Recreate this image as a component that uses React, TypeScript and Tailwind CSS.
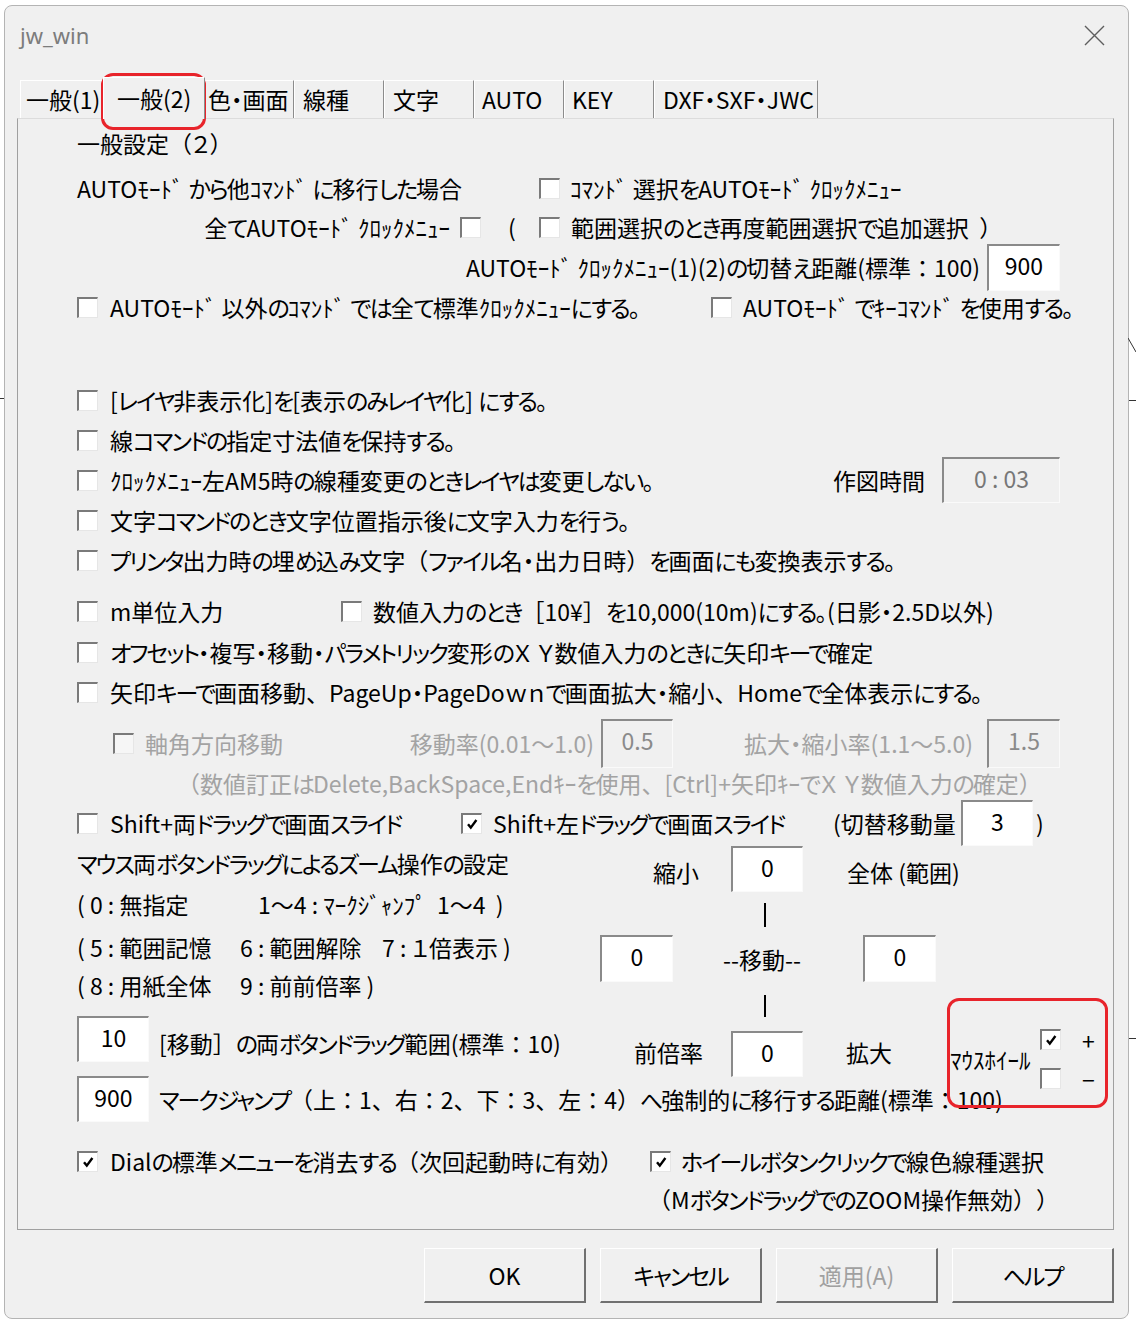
import React from 'react';

// Meiryo UI look: kana proportional and a bit tight, brackets/colons full width
const WIDE = '（）［］：、';
function T({ s }: { s: string }) {
  const out: React.ReactNode[] = [];
  let buf = '';
  let kind = '';
  const flush = () => {
    if (!buf) return;
    const key = out.length;
    if (kind === 'w') out.push(<span key={key} className="[font-feature-settings:normal]">{buf}</span>);
    else if (kind === 'k') out.push(<span key={key} className="tracking-[-2px]">{buf}</span>);
    else out.push(<React.Fragment key={key}>{buf}</React.Fragment>);
    buf = '';
  };
  for (const ch of s) {
    const c = ch.codePointAt(0) || 0;
    const k = WIDE.includes(ch) ? 'w' : (c >= 0x3041 && c <= 0x30fa) || c === 0x30fc ? 'k' : 'n';
    if (k !== kind) {
      flush();
      kind = k;
    }
    buf += ch;
  }
  flush();
  return <>{out}</>;
}

// classic sunken checkbox
function Check({ on = false, dim = false }: { on?: boolean; dim?: boolean }) {
  return (
    <span
      className={`inline-flex items-center justify-center w-[21px] h-[21px] shrink-0 border-t-2 border-l-2 border-r border-b border-t-[#7a7a7a] border-l-[#7a7a7a] border-r-[#e6e6e6] border-b-[#e6e6e6] ${
        dim ? 'bg-[#f6f6f6]' : 'bg-white'
      }`}
    >
      {on && (
        <svg width="12" height="12" viewBox="0 0 12 12">
          <path d="M2 6.2 L4.8 9.6 L10.4 2" fill="none" stroke="#000" strokeWidth="2.4" />
        </svg>
      )}
    </span>
  );
}

function Box({ v, className = '', dim = false }: { v: string; className?: string; dim?: boolean }) {
  return (
    <div
      className={`flex justify-center pt-[4px] shrink-0 border-t-2 border-l-2 border-r border-b border-t-[#8a8a8a] border-l-[#8a8a8a] border-r-[#fafafa] border-b-[#fafafa] leading-[30px] ${
        dim ? 'bg-[#f0f0f0] text-[#8a8a8a]' : 'bg-white text-black'
      } ${className}`}
    >
      {v}
    </div>
  );
}

const tabs = [
  { label: '一般(1)', cls: 'w-[83px] pl-[5px]' },
  { label: '一般(2)', cls: 'w-[102px] pl-[13px]', active: true },
  { label: '色・画面', cls: 'w-[89px] pl-[2px]' },
  { label: '線種', cls: 'w-[90px] pl-[8px]' },
  { label: '文字', cls: 'w-[90px] pl-[8px]' },
  { label: 'AUTO', cls: 'w-[90px] pl-[7px]' },
  { label: 'KEY', cls: 'w-[90px] pl-[7px]' },
  { label: 'DXF・SXF・JWC', cls: 'w-[164px] pl-[8px]' },
];

export default function App() {
  const gray = 'text-[#a3a3a3]';
  return (
    <div className="relative w-[1136px] h-[1320px] overflow-hidden bg-white pt-[5px] pl-[4px] text-[23px] leading-[30px] text-black whitespace-nowrap [font-family:'Noto_Sans_CJK_JP','Noto_Sans',sans-serif] [font-feature-settings:'palt']">
      {/* bits of the app behind the dialog */}
      <div className="absolute left-0 top-[398px] w-[4px] h-[1px] bg-[#333]" />
      <div className="absolute left-[1129px] top-[400px] w-[7px] h-[1px] bg-[#333]" />
      <div className="absolute left-[1129px] top-[1038px] w-[7px] h-[1px] bg-[#333]" />
      <svg className="absolute left-[1128px] top-[338px]" width="8" height="16" viewBox="0 0 8 16">
        <path d="M0 0 L8 14" stroke="#333" strokeWidth="1" />
      </svg>

      <div className="w-[1125px] h-[1314px] rounded-[8px] border border-[#b4b4b4] bg-[#f0f0f0] flex flex-col">
        {/* title bar */}
        <div className="h-[58px] flex items-center justify-between pl-[15px] pr-[23px]">
          <span className="text-[22px] text-[#7c7c7c] [font-family:'Noto_Sans',sans-serif]">jw_win</span>
          <svg width="21" height="21" viewBox="0 0 21 21">
            <path d="M1 1 L20 20 M20 1 L1 20" stroke="#5e5e5e" strokeWidth="1.4" />
          </svg>
        </div>

        {/* tabs */}
        <div className="flex items-end h-[38px] ml-[15px] mt-[16px]">
          {tabs.map((t) => (
            <div
              key={t.label}
              className={`${t.cls} shrink-0 border-t border-l border-r border-t-white border-l-white border-r-[#8c8c8c] leading-[36px] ${
                t.active ? 'relative z-10 h-[42px] -mb-[1px] pt-[2px] bg-[#f0f0f0]' : 'h-[38px]'
              }`}
            >
              {t.label}
            </div>
          ))}
        </div>

        {/* tab panel */}
        <div className="ml-[12px] w-[1097px] h-[1112px] shrink-0 border border-[#a0a0a0] border-t-[#dcdcdc] flex flex-col pl-[59px] pt-[4px]">
          <div className="h-[40px] flex items-center">
            <T s="一般設定（２）" />
          </div>

          <div className="h-[50px] flex items-center">
            <div className="w-[462px] shrink-0">
              <T s="AUTOﾓｰﾄﾞ から他ｺﾏﾝﾄﾞ に移行した場合" />
            </div>
            <Check />
            <span className="ml-[10px]">
              <T s="ｺﾏﾝﾄﾞ 選択をAUTOﾓｰﾄﾞ ｸﾛｯｸﾒﾆｭｰ" />
            </span>
          </div>

          <div className="h-[28px] flex items-center">
            <div className="w-[383px] shrink-0 flex justify-end pr-[10px]">
              <T s="全てAUTOﾓｰﾄﾞ ｸﾛｯｸﾒﾆｭｰ" />
            </div>
            <Check />
            <div className="w-[58px] shrink-0 pl-[27px]">(</div>
            <Check />
            <span className="ml-[11px] whitespace-pre">
              <T s="範囲選択のとき再度範囲選択で追加選択  ）" />
            </span>
          </div>

          <div className="h-[52px] flex items-center">
            <div className="w-[910px] shrink-0 flex justify-end pr-[7px]">
              <T s="AUTOﾓｰﾄﾞ ｸﾛｯｸﾒﾆｭｰ(1)(2)の切替え距離(標準：100)" />
            </div>
            <Box v="900" className="w-[73px] h-[47px]" />
          </div>

          <div className="h-[28px] flex items-center">
            <div className="w-[634px] shrink-0 flex items-center">
              <Check />
              <span className="ml-[12px]">
                <T s="AUTOﾓｰﾄﾞ 以外のｺﾏﾝﾄﾞ では全て標準ｸﾛｯｸﾒﾆｭｰにする。" />
              </span>
            </div>
            <Check />
            <span className="ml-[11px]">
              <T s="AUTOﾓｰﾄﾞ でｷｰｺﾏﾝﾄﾞ を使用する。" />
            </span>
          </div>

          <div className="h-[59px]" />

          <div className="h-[40px] flex items-center">
            <Check />
            <span className="ml-[12px]">
              <T s="[レイヤ非表示化]を[表示のみレイヤ化] にする。" />
            </span>
          </div>
          <div className="h-[40px] flex items-center">
            <Check />
            <span className="ml-[12px]">
              <T s="線コマンドの指定寸法値を保持する。" />
            </span>
          </div>
          <div className="h-[40px] flex items-center">
            <div className="w-[756px] shrink-0 flex items-center">
              <Check />
              <span className="ml-[12px]">
                <T s="ｸﾛｯｸﾒﾆｭｰ左AM5時の線種変更のときレイヤは変更しない。" />
              </span>
            </div>
            <div className="w-[109px] shrink-0">作図時間</div>
            <Box v="0 : 03" dim className="w-[118px] h-[46px] !text-[#777]" />
          </div>
          <div className="h-[40px] flex items-center">
            <Check />
            <span className="ml-[12px]">
              <T s="文字コマンドのとき文字位置指示後に文字入力を行う。" />
            </span>
          </div>
          <div className="h-[40px] flex items-center">
            <Check />
            <span className="ml-[12px]">
              <T s="プリンタ出力時の埋め込み文字（ファイル名・出力日時）を画面にも変換表示する。" />
            </span>
          </div>

          <div className="h-[11px]" />

          <div className="h-[40px] flex items-center">
            <div className="w-[264px] shrink-0 flex items-center">
              <Check />
              <span className="ml-[12px]">m単位入力</span>
            </div>
            <Check />
            <span className="ml-[11px]">
              <T s="数値入力のとき［10¥］を10,000(10m)にする。(日影・2.5D以外)" />
            </span>
          </div>
          <div className="h-[1px]" />
          <div className="h-[40px] flex items-center">
            <Check />
            <span className="ml-[12px]">
              <T s="オフセット・複写・移動・パラメトリック変形のＸ Ｙ数値入力のときに矢印キーで確定" />
            </span>
          </div>
          <div className="h-[40px] flex items-center">
            <Check />
            <span className="ml-[12px]">
              <T s="矢印キーで画面移動、PageUp・PageDoｗｎで画面拡大・縮小、Homeで全体表示にする。" />
            </span>
          </div>

          <div className="h-[6px]" />

          <div className={`h-[50px] flex items-center ${gray}`}>
            <div className="w-[333px] shrink-0 flex items-center pl-[36px]">
              <Check dim />
              <span className="ml-[11px]">軸角方向移動</span>
            </div>
            <div className="w-[191px] shrink-0 flex justify-end pr-[7px]">移動率(0.01～1.0)</div>
            <Box v="0.5" dim className="w-[72px] h-[49px]" />
            <div className="w-[314px] shrink-0 flex justify-end pr-[14px]">拡大・縮小率(1.1～5.0)</div>
            <Box v="1.5" dim className="w-[73px] h-[49px]" />
          </div>
          <div className={`h-[30px] flex items-center pl-[100px] ${gray}`}>
            <T s="（数値訂正はDelete,BackSpace,Endｷｰを使用、[Ctrl]+矢印ｷｰでＸ Ｙ数値入力の確定）" />
          </div>

          <div className="h-[2px]" />

          <div className="h-[46px] flex items-center">
            <div className="w-[384px] shrink-0 flex items-center">
              <Check />
              <span className="ml-[12px]">
                <T s="Shift+両ドラッグで画面スライド" />
              </span>
            </div>
            <div className="w-[372px] shrink-0 flex items-center">
              <Check on />
              <span className="ml-[11px]">
                <T s="Shift+左ドラッグで画面スライド" />
              </span>
            </div>
            <div className="w-[128px] shrink-0">(切替移動量</div>
            <Box v="3" className="w-[72px] h-[46px]" />
            <span className="ml-[3px]">)</span>
          </div>

          {/* zoom settings */}
          <div className="h-[170px] flex">
            <div className="w-[523px] shrink-0 flex flex-col">
              <div className="h-[34px] flex items-center">
                <T s="マウス両ボタンドラッグによるズーム操作の設定" />
              </div>
              <div className="h-[48px] flex items-center">
                <span className="w-[181px] shrink-0">( 0 : 無指定</span>
                <span className="whitespace-pre">1～4 : ﾏｰｸｼﾞｬﾝﾌﾟ  1～4  )</span>
              </div>
              <div className="h-[38px] flex items-center">
                <span className="w-[163px] shrink-0">( 5 : 範囲記憶</span>
                <span className="w-[142px] shrink-0">6 : 範囲解除</span>
                <span>7 : １倍表示 )</span>
              </div>
              <div className="h-[38px] flex items-center">
                <span className="w-[163px] shrink-0">( 8 : 用紙全体</span>
                <span>9 : 前前倍率 )</span>
              </div>
            </div>
            <div className="flex flex-col">
              <div className="h-[44px] flex items-start">
                <div className="w-[53px] shrink-0" />
                <div className="w-[78px] shrink-0 mt-[11px]">縮小</div>
                <Box v="0" className="w-[72px] h-[46px]" />
                <div className="w-[44px] shrink-0" />
                <div className="mt-[11px]">全体 (範囲)</div>
              </div>
              <div className="h-[45px]">
                <div className="ml-[164px] mt-[13px] w-[2px] h-[24px] bg-black" />
              </div>
              <div className="h-[47px] flex items-center">
                <Box v="0" className="w-[73px] h-[47px]" />
                <div className="w-[50px] shrink-0" />
                <div className="w-[140px] shrink-0">--移動--</div>
                <Box v="0" className="w-[73px] h-[47px]" />
              </div>
              <div className="h-[34px]">
                <div className="ml-[164px] mt-[13px] w-[2px] h-[22px] bg-black" />
              </div>
            </div>
          </div>

          <div className="h-[60px] flex items-start">
            <div className="w-[557px] shrink-0 flex items-start">
              <Box v="10" className="w-[72px] h-[46px]" />
              <span className="ml-[10px] mt-[12px]">
                <T s="[移動］の両ボタンドラッグ範囲(標準：10)" />
              </span>
            </div>
            <div className="w-[97px] shrink-0 mt-[21px]">前倍率</div>
            <Box v="0" className="w-[72px] h-[46px] mt-[15px]" />
            <div className="w-[43px] shrink-0" />
            <div className="w-[104px] shrink-0 mt-[21px]">拡大</div>
            <div className="mt-[13px] h-[60px] flex items-center">
              <span className="w-[90px] shrink-0">ﾏｳｽﾎｲｰﾙ</span>
              <div className="flex flex-col gap-[18px]">
                <div className="flex items-center h-[21px]">
                  <Check on />
                  <span className="ml-[21px]">+</span>
                </div>
                <div className="flex items-center h-[21px]">
                  <Check />
                  <span className="ml-[21px]">−</span>
                </div>
              </div>
            </div>
          </div>

          <div className="h-[46px] flex items-center">
            <Box v="900" className="w-[72px] h-[46px]" />
            <span className="ml-[10px]">
              <T s="マークジャンプ（上：1、右：2、下：3、左：4）へ強制的に移行する距離(標準：100)" />
            </span>
          </div>

          <div className="h-[19px]" />

          <div className="h-[40px] flex items-center">
            <div className="w-[573px] shrink-0 flex items-center">
              <Check on />
              <span className="ml-[12px]">
                <T s="Dialの標準メニューを消去する（次回起動時に有効）" />
              </span>
            </div>
            <Check on />
            <span className="ml-[10px]">
              <T s="ホイールボタンクリックで線色線種選択" />
            </span>
          </div>
          <div className="h-[36px] flex items-center pl-[571px]">
            <T s="（MボタンドラッグでのZOOM操作無効） ）" />
          </div>
        </div>

        {/* buttons */}
        <div className="flex justify-end gap-[14px] mt-[18px] pr-[14px]">
          {['OK', 'キャンセル', '適用(A)', 'ヘルプ'].map((b) => (
            <div
              key={b}
              className={`w-[162px] h-[55px] flex items-center justify-center bg-[#f0f0f0] border-t border-l border-b-2 border-r-2 border-t-white border-l-white border-b-[#707070] border-r-[#707070] ${
                b === '適用(A)' ? 'text-[#a0a0a0]' : ''
              }`}
            >
              <T s={b} />
            </div>
          ))}
        </div>
      </div>

      {/* annotations */}
      <div className="absolute left-[101px] top-[73px] w-[105px] h-[57px] rounded-[12px] border-[3px] border-[#e8242b]" />
      <div className="absolute left-[947px] top-[998px] w-[161px] h-[110px] rounded-[12px] border-[3px] border-[#e8242b]" />
    </div>
  );
}
